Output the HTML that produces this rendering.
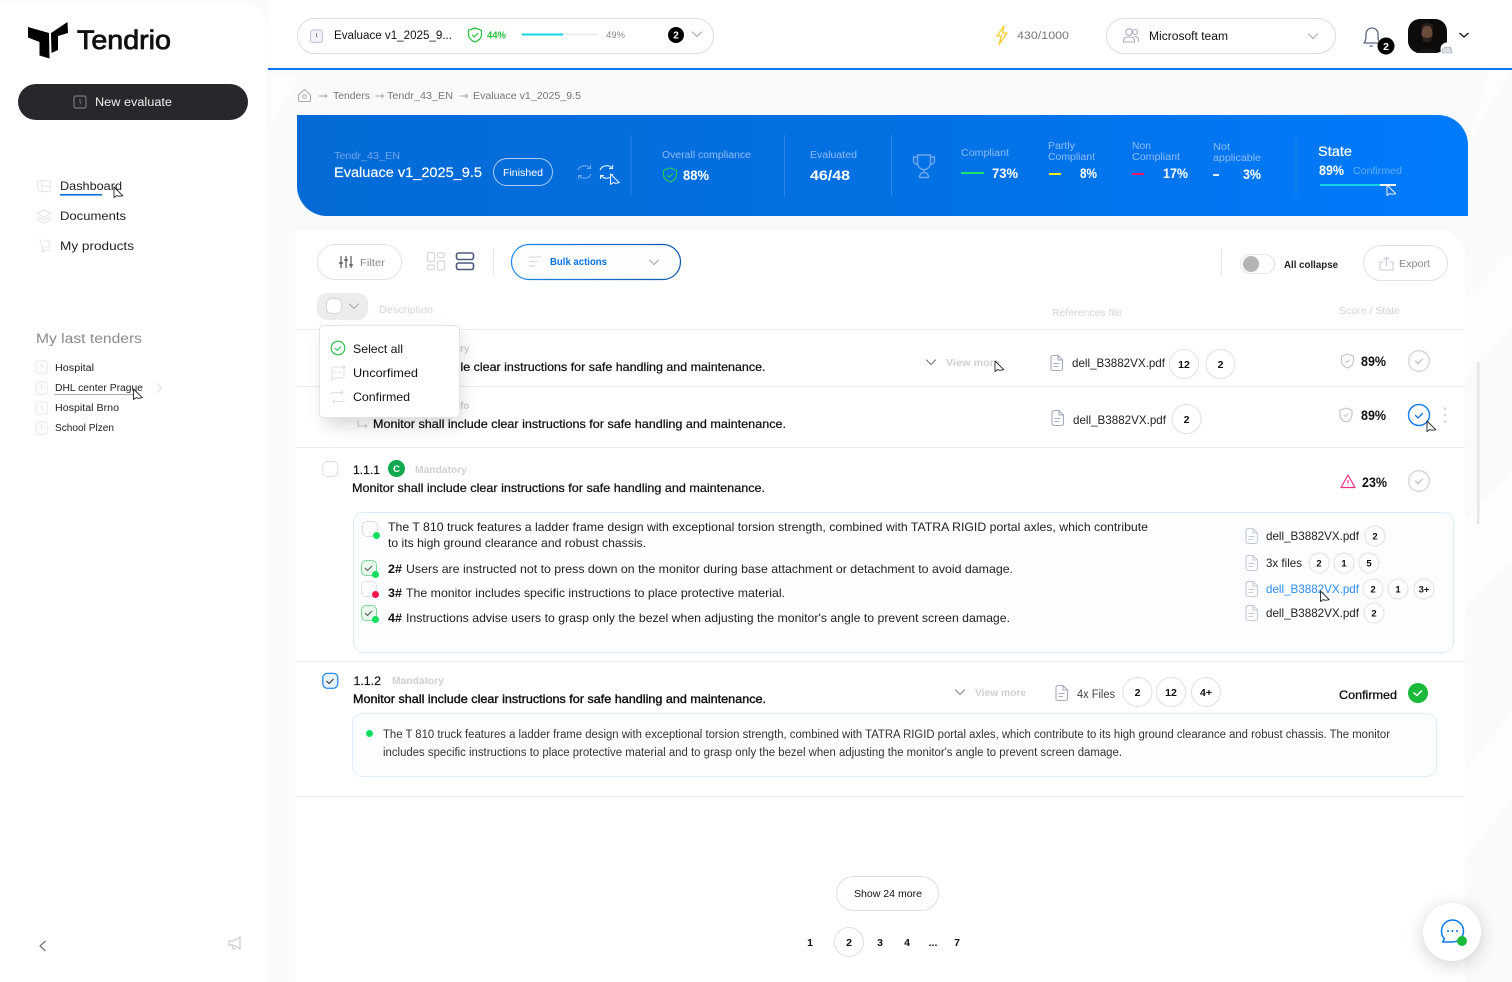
<!DOCTYPE html>
<html lang="en"><head><meta charset="utf-8"><title>Tendrio</title>
<style>
html,body{margin:0;padding:0;width:1512px;height:982px;overflow:hidden;background:#f8fafc}
svg{display:block;font-family:"Liberation Sans",sans-serif}
text{white-space:pre}
.s12{font-size:12px;fill:#222}
.m{font-size:12px;fill:#111;stroke:#111;stroke-width:.25}
.b{font-size:12px;font-weight:700;fill:#111}
.g{font-size:10px;fill:#777}
.l{font-size:10px;fill:#d8d2d2}
.lb{font-size:10px;font-weight:700;fill:#d0d0d0}
.bl{font-size:10px;fill:#8dbcf5}
.w{font-size:14px;font-weight:700;fill:#fff}
.p{font-size:14px;font-weight:700;fill:#111}
.c{text-anchor:middle;font-size:10.5px;font-weight:700;fill:#111}
.ln{fill:none;stroke:#d9d9d9;stroke-width:1}
.ic{fill:none;stroke:#c9cdd8;stroke-width:1.1;stroke-linecap:round;stroke-linejoin:round}
.dc{fill:none;stroke:#a4a9bd;stroke-width:1.1;stroke-linecap:round;stroke-linejoin:round}
.cur{fill:#fff;stroke:#222;stroke-width:.9;stroke-linejoin:round}
.curw{fill:#0a74ee;stroke:#fff;stroke-width:.9;stroke-linejoin:round}
.circ{fill:#fff;stroke:#e0e0e0;stroke-width:1}
</style></head><body>
<svg width="1512" height="982" viewBox="0 0 1512 982" xmlns="http://www.w3.org/2000/svg">
<defs>
<linearGradient id="ban" x1="0" x2="1" y1="0" y2="0"><stop offset="0" stop-color="#046bd6"/><stop offset=".5" stop-color="#0370e2"/><stop offset="1" stop-color="#007bfd"/></linearGradient>
<linearGradient id="bulk" x1="0" x2="1"><stop offset="0" stop-color="#1f86ee"/><stop offset="1" stop-color="#0a55a8"/></linearGradient>
<filter id="sh" x="-40%" y="-40%" width="180%" height="180%"><feGaussianBlur stdDeviation="9"/></filter>
<g id="doc"><path class="dc" d="M1 2.500a2 2 0 0 1 2-2h5l4.500 4.500v8.500a2 2 0 0 1-2 2H3a2 2 0 0 1-2-2z M8 .5v4.500h4.500 M4 8.500h5 M4 11.500h3.500"/></g>
<g id="cur"><path class="cur" d="M0 0l0 10.500 2.700-1.900 2.300 0.700 3.800-.6z"/></g>
<g id="curw"><path class="curw" d="M0 0l0 10.500 2.700-1.900 2.300 0.700 3.800-.6z"/></g>
<g id="chk"><circle r="10.300" fill="#fff" stroke="#d4d4d4" stroke-width="1.300"/><path d="M-3.500 .2l2.500 2.500 4.500-4.500" fill="none" stroke="#bbb" stroke-width="1.100" stroke-linecap="round" stroke-linejoin="round"/></g>
<g id="shield"><path fill="none" stroke="#c4c4c4" stroke-width="1.100" stroke-linejoin="round" d="M0-7l6 2.200v4.300c0 3.600-2.500 6.200-6 7.500-3.500-1.300-6-3.900-6-7.500v-4.300z M-2.300-.2l1.700 1.700 3-3"/></g>
<g id="chev"><path d="M-4.500-2l4.500 4.500 4.500-4.500" fill="none" stroke="#aaa" stroke-width="1.200" stroke-linecap="round" stroke-linejoin="round"/></g>
<g id="clock"><rect x=".6" y=".6" width="11.800" height="12.800" rx="2.500" fill="#fbfbfb" stroke="#eee" stroke-width="1.200"/><path d="M6.500 3.500v3l1.200 1.500" fill="none" stroke="#e3e3e3"/></g>
</defs>

<!-- background -->
<rect width="1512" height="982" fill="#f8fafc"/>
<path d="M1465 300L1512 250V330L1465 380zM1465 520L1512 470V560L1465 610zM1465 770L1512 710V800L1465 860zM270 75L300 75 270 130zM1490 70L1512 70 1470 140z" fill="#fcfdfe"/>

<!-- sidebar -->
<path d="M0 3H245a22 22 0 0 1 22 22V982H0z" fill="#fff"/>
<path d="M28 27L49 33 49.500 58.500 39.500 55.500 39.500 42 28 37.500z" fill="#000"/>
<path d="M51 33L67.500 22 68 33 58 36 58 50 51.500 53z" fill="#000"/>
<text x="77" y="49" font-size="27" fill="#111" stroke="#111" stroke-width=".8" textLength="94" lengthAdjust="spacingAndGlyphs">Tendrio</text>
<rect x="18" y="84" width="230" height="36" rx="18" fill="#27282b"/>
<rect x="74" y="96" width="12" height="12" rx="2" fill="none" stroke="#77797e" stroke-width="1.200"/><path d="M80 99v3l1 1.500" stroke="#77797e" fill="none"/>
<text x="95" y="106" font-size="11.500" fill="#eee" textLength="77" lengthAdjust="spacingAndGlyphs">New evaluate</text>

<rect x="37.500" y="180.500" width="13" height="11" rx="2.500" fill="none" stroke="#e6e6e6" stroke-width="1.200"/><path d="M42 180.500v11M42 186h8" stroke="#e6e6e6" fill="none"/>
<text x="60" y="190" class="s12" textLength="62" lengthAdjust="spacingAndGlyphs">Dashboard</text>
<rect x="60" y="194" width="42" height="1.600" fill="#0a6fe0"/>
<use href="#cur" x="114" y="187"/>
<path d="M44 210l7 3.500-7 3.500-7-3.500zM37 216.500l7 3.500 7-3.500M37 219.500l7 3.500 7-3.500" fill="none" stroke="#e4e4e4"/>
<text x="60" y="220" class="s12" textLength="66" lengthAdjust="spacingAndGlyphs">Documents</text>
<path d="M38 240h2.500l2.500 10h7.500M44 241h6l-1 6h-5" fill="none" stroke="#e4e4e4"/><circle cx="43" cy="251" r="1" fill="none" stroke="#e4e4e4"/>
<text x="60" y="250" class="s12" textLength="74" lengthAdjust="spacingAndGlyphs">My products</text>

<text x="36" y="343" font-size="13.500" fill="#8b8b8b" textLength="106" lengthAdjust="spacingAndGlyphs">My last tenders</text>
<use href="#clock" x="35" y="360"/><text x="55" y="371" font-size="10" fill="#222" textLength="39" lengthAdjust="spacingAndGlyphs">Hospital</text>
<use href="#clock" x="35" y="381"/><text x="55" y="391" font-size="10" fill="#222" textLength="88" lengthAdjust="spacingAndGlyphs">DHL center Prague</text>
<rect x="55" y="394" width="78" height="1" fill="#aaa"/><use href="#cur" x="133.500" y="389"/>
<path d="M157 383l4.500 5-4.500 5" fill="none" stroke="#e4e4e4" stroke-width="1.200"/>
<use href="#clock" x="35" y="401"/><text x="55" y="411" font-size="10" fill="#222" textLength="64" lengthAdjust="spacingAndGlyphs">Hospital Brno</text>
<use href="#clock" x="35" y="421"/><text x="55" y="431" font-size="10" fill="#222" textLength="59" lengthAdjust="spacingAndGlyphs">School Plzen</text>
<path d="M45 941.500l-5 4.500 5 4.500" fill="none" stroke="#777" stroke-width="1.300" stroke-linecap="round" stroke-linejoin="round"/>
<path d="M229 941h4l7-4v12l-7-4h-4zM232 945l1 4h2.500" fill="none" stroke="#ccc" stroke-width="1.200" stroke-linejoin="round"/>

<!-- header -->
<rect x="268" y="0" width="1244" height="68" fill="#fff"/>
<rect x="268" y="68" width="1244" height="2" fill="#0b78ee"/>
<rect x="297.500" y="18.500" width="416" height="35" rx="17.500" fill="#fff" stroke="#dedede"/>
<rect x="310.500" y="30" width="12" height="12.500" rx="2.500" fill="#f3f4f7" stroke="#c4c8d2" stroke-width="1.200"/><path d="M316.500 33v3l1 1.500" stroke="#888" fill="none"/>
<text x="334" y="39" font-size="11.500" fill="#111" textLength="118" lengthAdjust="spacingAndGlyphs">Evaluace v1_2025_9...</text>
<path d="M475 28l6.500 2.300v4.200c0 3.700-2.700 6-6.500 7.500-3.800-1.500-6.500-3.800-6.500-7.500v-4.200zM472 34.800l2.200 2.200 3.800-3.800" fill="none" stroke="#25c23f" stroke-width="1.200" stroke-linejoin="round"/>
<text x="487" y="38.500" font-size="10" font-weight="700" fill="#24c13b" textLength="19" lengthAdjust="spacingAndGlyphs">44%</text>
<rect x="522" y="33.500" width="76" height="2" fill="#eeeeee"/><rect x="522" y="33.500" width="41" height="2" fill="#14d3e3"/>
<text x="606" y="38" font-size="9.500" fill="#888" textLength="19" lengthAdjust="spacingAndGlyphs">49%</text>
<circle cx="676" cy="35" r="8" fill="#000"/><text x="676" y="38.500" font-size="10" font-weight="700" fill="#fff" text-anchor="middle">2</text>
<use href="#chev" x="697" y="34"/>
<path d="M1004 26l-7 10h4.500l-2.500 8.500 8-11.500h-4.500z" fill="none" stroke="#f7cf2a" stroke-width="1.300" stroke-linejoin="round"/>
<text x="1017" y="39" font-size="11" fill="#777" textLength="52" lengthAdjust="spacingAndGlyphs">430/1000</text>
<rect x="1106.500" y="18.500" width="229" height="35" rx="17.500" fill="#fff" stroke="#dedede"/>
<circle cx="1129" cy="32" r="3.200" class="dc"/><circle cx="1135" cy="32" r="2.500" class="dc"/><path class="dc" d="M1123.500 42v-2a4 4 0 0 1 4-3h3a4 4 0 0 1 4 3v2zM1135 36.500a3.500 3.500 0 0 1 3.500 3.500v1.500"/>
<text x="1149" y="40" font-size="11.500" fill="#111" textLength="79" lengthAdjust="spacingAndGlyphs">Microsoft team</text>
<use href="#chev" x="1313" y="36"/>
<path d="M1364 43c2-2 2-5 2-9a6 6 0 0 1 12 0c0 4 0 7 2 9zM1370 46h2.500" fill="none" stroke="#5a6685" stroke-width="1.300" stroke-linejoin="round" stroke-linecap="round"/>
<circle cx="1386" cy="46" r="8.500" fill="#000"/><text x="1386" y="50" font-size="10.500" font-weight="700" fill="#fff" text-anchor="middle">2</text>
<rect x="1408" y="19" width="39" height="34" rx="12" fill="#0e0c0b"/>
<ellipse cx="1427" cy="33" rx="5.500" ry="7.500" fill="#6a4a3c"/><path d="M1421 30q6-8 12 0l-.5-5q-5.500-4-11 0z" fill="#2a1f1a"/><path d="M1422 36q5 4 10 0l-1 5q-4 3-8 0z" fill="#2c211c"/><path d="M1416 53q11-9 22 0z" fill="#191616"/>
<circle cx="1447" cy="49" r="6.500" fill="#fff"/><path d="M1442.500 53v-4h1.500l.5-2 1.500 1 1.500-1 1.500 1 1.500-1 .3 2h1v4z" fill="#dbe0e8" stroke="#9aa2b2" stroke-width=".6"/>
<path d="M1459.500 33l4.500 4 4.500-4" fill="none" stroke="#111" stroke-width="1.400"/>

<!-- breadcrumb -->
<path class="ic" style="stroke:#aaa" d="M298.500 95l6-5.500 6 5.500v5a1.500 1.500 0 0 1-1.500 1.500h-9a1.500 1.500 0 0 1-1.500-1.500z"/><circle cx="304.500" cy="96.500" r="1.800" fill="none" stroke="#aaa"/>
<path d="M319 96h8m-2-2l2 2-2 2M375.500 96h8m-2-2l2 2-2 2M459.500 96h8m-2-2l2 2-2 2" fill="none" stroke="#aaa" stroke-width=".9"/>
<text x="333" y="99" class="g" textLength="37" lengthAdjust="spacingAndGlyphs">Tenders</text>
<text x="387" y="99" class="g" textLength="66" lengthAdjust="spacingAndGlyphs">Tendr_43_EN</text>
<text x="473" y="99" class="g" textLength="108" lengthAdjust="spacingAndGlyphs">Evaluace v1_2025_9.5</text>

<!-- banner -->
<path d="M297 115H1438a30 30 0 0 1 30 30V216H327a30 30 0 0 1-30-30z" fill="url(#ban)"/>
<text x="334" y="159" font-size="10" fill="#6fa6ec" textLength="66" lengthAdjust="spacingAndGlyphs">Tendr_43_EN</text>
<text x="334" y="177" font-size="13.500" fill="#fff" stroke="#fff" stroke-width=".15" textLength="148" lengthAdjust="spacingAndGlyphs">Evaluace v1_2025_9.5</text>
<rect x="493.500" y="158.500" width="59" height="27" rx="13.500" fill="none" stroke="#a7cbf6"/>
<text x="503" y="176" font-size="10" fill="#fff" textLength="40" lengthAdjust="spacingAndGlyphs">Finished</text>
<path d="M578 170a7 7 0 0 1 12-1.500M590.500 165v3.500h-3.500M591 174a7 7 0 0 1-12 1.500M578.500 179v-3.500h3.500" fill="none" stroke="#6fa7ee" stroke-width="1.100"/>
<path d="M600 170a7 7 0 0 1 12-1.500M612.500 165v3.500h-3.500M613 174a7 7 0 0 1-12 1.500M600.500 179v-3.500h3.500" fill="none" stroke="#e4effc" stroke-width="1.100"/>
<use href="#curw" x="610.500" y="174"/>
<g stroke="#2a86ea"><path d="M631 135V196M784.500 135V196M891.500 135V196M1296 137V197"/></g>
<text x="662" y="158" class="bl" textLength="89" lengthAdjust="spacingAndGlyphs">Overall compliance</text>
<path d="M670 168l6.500 2.300v4.200c0 3.700-2.700 6-6.500 7.500-3.800-1.500-6.500-3.800-6.500-7.500v-4.200zM667 175l2.200 2.200 3.800-3.800" fill="none" stroke="#21cf57" stroke-width="1.100" stroke-linejoin="round"/>
<text x="683" y="180" class="w" textLength="26" lengthAdjust="spacingAndGlyphs">88%</text>
<text x="810" y="158" class="bl" textLength="47" lengthAdjust="spacingAndGlyphs">Evaluated</text>
<text x="810" y="180" class="w" textLength="40" lengthAdjust="spacingAndGlyphs">46/48</text>
<path d="M917.500 155h13v8a6.500 6.500 0 0 1-13 0zM917.500 157h-4v3.500a4 4 0 0 0 4.500 4M930.500 157h4v3.500a4 4 0 0 1-4.500 4M924 169.500v3M919.500 177.500c0-3 2-5 4.500-5s4.500 2 4.500 5z" fill="none" stroke="#6ea8ee" stroke-width="1.400" stroke-linejoin="round"/>
<text x="961" y="156" class="bl" textLength="48" lengthAdjust="spacingAndGlyphs">Compliant</text>
<rect x="961" y="172" width="23" height="2" fill="#19e36f"/>
<text x="992" y="178" class="w" textLength="26" lengthAdjust="spacingAndGlyphs">73%</text>
<text x="1048" y="149" class="bl" textLength="27" lengthAdjust="spacingAndGlyphs">Partly</text><text x="1048" y="160" class="bl" textLength="47" lengthAdjust="spacingAndGlyphs">Compliant</text>
<rect x="1049" y="173" width="12" height="2" fill="#f5f010"/>
<text x="1080" y="178" class="w" textLength="17" lengthAdjust="spacingAndGlyphs">8%</text>
<text x="1132" y="149" class="bl" textLength="19" lengthAdjust="spacingAndGlyphs">Non</text><text x="1132" y="160" class="bl" textLength="48" lengthAdjust="spacingAndGlyphs">Compliant</text>
<rect x="1132" y="173" width="12" height="2" fill="#f0126c"/>
<text x="1163" y="178" class="w" textLength="25" lengthAdjust="spacingAndGlyphs">17%</text>
<text x="1213" y="150" class="bl" textLength="17" lengthAdjust="spacingAndGlyphs">Not</text><text x="1213" y="161" class="bl" textLength="48" lengthAdjust="spacingAndGlyphs">applicable</text>
<rect x="1213" y="174" width="6" height="2" fill="#dfeeff"/>
<text x="1243" y="179" class="w" textLength="18" lengthAdjust="spacingAndGlyphs">3%</text>
<text x="1318" y="156" font-size="14" fill="#fff" stroke="#fff" stroke-width=".2" textLength="34" lengthAdjust="spacingAndGlyphs">State</text>
<text x="1319" y="175" class="w" textLength="25" lengthAdjust="spacingAndGlyphs">89%</text>
<text x="1353" y="174" class="bl" textLength="49" lengthAdjust="spacingAndGlyphs" style="fill:#64adfb">Confirmed</text>
<rect x="1320" y="184" width="76" height="2" fill="#fff"/><rect x="1320" y="184" width="60" height="2" fill="#14d3e3"/>
<use href="#curw" x="1387" y="185"/>

<!-- main panel -->
<path d="M295 230H1440a25 25 0 0 1 25 25V982H295z" fill="#fff"/>
<rect x="317.500" y="244.500" width="84" height="35" rx="17.500" fill="#fff" stroke="#e2e2e2"/>
<path d="M341 256v12M346 256v12M351 256v12M339 263h4M344 260h4M349 265h4" stroke="#333" stroke-width="1" fill="none"/>
<text x="360" y="266" font-size="10.500" fill="#888" textLength="25" lengthAdjust="spacingAndGlyphs">Filter</text>
<g fill="none" stroke="#d8d8d8" stroke-width="1.300"><rect x="427.500" y="252.500" width="7" height="9" rx="1.500"/><rect x="437.500" y="253" width="7" height="4.500" rx="1.500"/><rect x="427.500" y="265" width="7" height="4.500" rx="1.500"/><rect x="437.500" y="261" width="7" height="9" rx="1.500"/></g>
<g fill="none" stroke="#4a5a78" stroke-width="1.600"><rect x="456.500" y="253" width="17" height="6.500" rx="2"/><rect x="456.500" y="263" width="17" height="6.500" rx="2"/></g>
<rect x="493" y="249" width="1" height="25" fill="#e3e3e3"/>
<rect x="511.500" y="244.500" width="169" height="35" rx="17.500" fill="#fbfdff" stroke="url(#bulk)" stroke-width="1.200"/>
<path d="M529 257h12M529 261.500h9M529 266h6" stroke="#ddd" stroke-width="1.300" fill="none"/>
<text x="550" y="265" font-size="10.500" font-weight="700" fill="#0a6fe0" textLength="57" lengthAdjust="spacingAndGlyphs">Bulk actions</text>
<use href="#chev" x="654" y="262"/>
<rect x="1221" y="249" width="1" height="26" fill="#e3e3e3"/>
<rect x="1240.500" y="254.500" width="34" height="19" rx="9.500" fill="#fff" stroke="#e4e4e4"/><circle cx="1251" cy="264" r="8" fill="#b4b4b4"/>
<text x="1284" y="268" font-size="10" font-weight="700" fill="#222" textLength="54" lengthAdjust="spacingAndGlyphs">All collapse</text>
<rect x="1363.500" y="245.500" width="84" height="35" rx="17.500" fill="#fff" stroke="#e2e2e2"/>
<path class="ic" d="M1383 262h-3v8h13v-8h-3M1386.500 266v-9m-2.500 2.500l2.500-2.500 2.500 2.500"/>
<text x="1399" y="267" font-size="10.500" fill="#888" textLength="31" lengthAdjust="spacingAndGlyphs">Export</text>

<rect x="317" y="293" width="51" height="27" rx="10" fill="#ececec"/>
<rect x="326.500" y="298.500" width="15" height="15" rx="5" fill="#fff" stroke="#d8d8d8"/>
<use href="#chev" x="354" y="306"/>
<text x="379" y="313" class="l" textLength="54" lengthAdjust="spacingAndGlyphs">Description</text>
<text x="1052" y="316" class="l" textLength="70" lengthAdjust="spacingAndGlyphs">References file</text>
<text x="1339" y="314" class="l" textLength="61" lengthAdjust="spacingAndGlyphs">Score / State</text>
<g fill="#ececec"><rect x="296" y="329" width="1169" height="1"/><rect x="296" y="386" width="1169" height="1"/><rect x="296" y="447" width="1169" height="1"/><rect x="296" y="661" width="1169" height="1"/><rect x="296" y="796" width="1169" height="1"/></g>

<!-- row 1 -->
<text x="460" y="352" class="lb">ry</text>
<text x="460.500" y="371" class="m" textLength="305" lengthAdjust="spacingAndGlyphs">le clear instructions for safe handling and maintenance.</text>
<path d="M926.500 360l4.500 4.500 4.500-4.500" fill="none" stroke="#777" stroke-width="1.200" stroke-linecap="round" stroke-linejoin="round"/>
<text x="946" y="366" class="lb" textLength="54" lengthAdjust="spacingAndGlyphs">View more</text>
<use href="#cur" x="995" y="361"/>
<use href="#doc" x="1050" y="355"/>
<text x="1072" y="367" class="s12" textLength="93" lengthAdjust="spacingAndGlyphs">dell_B3882VX.pdf</text>
<circle cx="1184" cy="364" r="14.500" class="circ"/><text x="1184" y="368" class="c">12</text>
<circle cx="1220.500" cy="364" r="14.500" class="circ"/><text x="1220.500" y="368" class="c">2</text>
<use href="#shield" x="1347.500" y="361"/>
<text x="1361" y="366" class="p" textLength="25" lengthAdjust="spacingAndGlyphs">89%</text>
<use href="#chk" x="1419" y="361"/>

<!-- row 2 -->
<text x="460" y="409" class="lb">fo</text>
<path d="M358 420v6h9m-2-2l2 2-2 2" fill="none" stroke="#ccc"/>
<text x="373" y="428" class="m" textLength="413" lengthAdjust="spacingAndGlyphs">Monitor shall include clear instructions for safe handling and maintenance.</text>
<use href="#doc" x="1051" y="410"/>
<text x="1073" y="424" class="s12" textLength="93" lengthAdjust="spacingAndGlyphs">dell_B3882VX.pdf</text>
<circle cx="1186.500" cy="419" r="14.500" class="circ"/><text x="1186.500" y="423" class="c">2</text>
<use href="#shield" x="1346" y="415"/>
<text x="1361" y="420" class="p" textLength="25" lengthAdjust="spacingAndGlyphs">89%</text>
<circle cx="1419" cy="415" r="10.500" fill="#fff" stroke="#1a80ef" stroke-width="1.500"/><path d="M1415.500 415.500l2.500 2.500 4.500-4.500" fill="none" stroke="#1a6fd5" stroke-width="1.300" stroke-linecap="round" stroke-linejoin="round"/>
<g fill="#d5d5d5"><circle cx="1445" cy="408.500" r="1.300"/><circle cx="1445" cy="415" r="1.300"/><circle cx="1445" cy="421.500" r="1.300"/></g>
<use href="#cur" x="1427" y="421"/>

<!-- dropdown -->
<rect x="325" y="335" width="135" height="90" rx="4" fill="#000" opacity=".16" filter="url(#sh)"/>
<rect x="319.500" y="325.500" width="140" height="92" rx="4" fill="#fff" stroke="#e4e4e4"/>
<circle cx="338" cy="348" r="6.800" fill="none" stroke="#21c04a" stroke-width="1.100"/><path d="M335 348.200l2.200 2.200 3.800-3.800" fill="none" stroke="#21c04a" stroke-width="1.100"/>
<text x="353" y="353" font-size="12" fill="#111" textLength="50" lengthAdjust="spacingAndGlyphs">Select all</text>
<path d="M332 367h11v2.500M344 371v6a1 1 0 0 1-1 1h-8l-3 2v-13" fill="none" stroke="#dde0ea" stroke-width="1.100"/><circle cx="344" cy="367" r="1" fill="none" stroke="#cfd3df" stroke-width=".8"/><path d="M335 372.500h6" stroke="#cfd3df" stroke-dasharray="1 1.500"/>
<text x="353" y="377" font-size="12" fill="#111" textLength="65" lengthAdjust="spacingAndGlyphs">Uncorfimed</text>
<path d="M332 395v-2.500h11m-2-2l2 2-2 2M344 399v2.500h-11m2 2l-2-2 2-2" fill="none" stroke="#dde0ea" stroke-width="1.100"/>
<text x="353" y="401" font-size="12" fill="#111" textLength="57" lengthAdjust="spacingAndGlyphs">Confirmed</text>

<!-- row 3 -->
<rect x="322.800" y="461.500" width="15" height="15" rx="4.500" fill="#fff" stroke="#dcdcdc"/>
<text x="353" y="474" font-size="12" fill="#111" stroke="#111" stroke-width=".2" textLength="27" lengthAdjust="spacingAndGlyphs">1.1.1</text>
<circle cx="396.500" cy="468.500" r="8.500" fill="#12a84f"/><text x="396.500" y="472" font-size="9.500" font-weight="700" fill="#fff" text-anchor="middle">C</text>
<text x="415" y="473" class="lb" textLength="52" lengthAdjust="spacingAndGlyphs">Mandatory</text>
<text x="352" y="492" class="m" textLength="413" lengthAdjust="spacingAndGlyphs">Monitor shall include clear instructions for safe handling and maintenance.</text>
<path d="M1348 475l7 12.500h-14zM1348 480v3.500M1348 485v.4" fill="none" stroke="#ef2f86" stroke-width="1.200" stroke-linejoin="round"/>
<text x="1362" y="487" class="p" textLength="25" lengthAdjust="spacingAndGlyphs">23%</text>
<use href="#chk" x="1419" y="481"/>

<rect x="353.500" y="512.500" width="1100" height="140" rx="10" fill="#fbfdff" stroke="#deedfb"/>
<rect x="362.500" y="521.500" width="15" height="15" rx="4.500" fill="#fff" stroke="#dcdcdc"/><circle cx="376.500" cy="535.500" r="3.500" fill="#12dd5f"/>
<text x="388" y="531" class="s12" textLength="760" lengthAdjust="spacingAndGlyphs">The T 810 truck features a ladder frame design with exceptional torsion strength, combined with TATRA RIGID portal axles, which contribute</text>
<text x="388" y="547" class="s12" textLength="258" lengthAdjust="spacingAndGlyphs">to its high ground clearance and robust chassis.</text>
<rect x="361.500" y="560.500" width="15" height="15" rx="4.500" fill="#e9f8ec" stroke="#7fd497"/><path d="M365 568l2.500 2.500 4.500-4.500" fill="none" stroke="#555" stroke-width="1"/><circle cx="375.500" cy="574.500" r="3.500" fill="#12dd5f"/>
<text x="388" y="573" class="b" textLength="14" lengthAdjust="spacingAndGlyphs">2#</text>
<text x="406" y="573" class="s12" textLength="607" lengthAdjust="spacingAndGlyphs">Users are instructed not to press down on the monitor during base attachment or detachment to avoid damage.</text>
<rect x="361.500" y="581.500" width="15" height="15" rx="4.500" fill="#fff" stroke="#e0e0e0"/><circle cx="375.500" cy="594.500" r="3.500" fill="#f5154c"/>
<text x="388" y="597" class="b" textLength="14" lengthAdjust="spacingAndGlyphs">3#</text>
<text x="406" y="597" class="s12" textLength="379" lengthAdjust="spacingAndGlyphs">The monitor includes specific instructions to place protective material.</text>
<rect x="361.500" y="605.500" width="15" height="15" rx="4.500" fill="#e9f8ec" stroke="#7fd497"/><path d="M365 613l2.500 2.500 4.500-4.500" fill="none" stroke="#555" stroke-width="1"/><circle cx="375.500" cy="619.500" r="3.500" fill="#12dd5f"/>
<text x="388" y="622" class="b" textLength="14" lengthAdjust="spacingAndGlyphs">4#</text>
<text x="406" y="622" class="s12" textLength="604" lengthAdjust="spacingAndGlyphs">Instructions advise users to grasp only the bezel when adjusting the monitor's angle to prevent screen damage.</text>

<g opacity=".6"><use href="#doc" x="1245" y="528"/><use href="#doc" x="1245" y="555"/><use href="#doc" x="1245" y="581"/><use href="#doc" x="1245" y="605"/></g>
<text x="1266" y="540" class="s12" textLength="93" lengthAdjust="spacingAndGlyphs">dell_B3882VX.pdf</text>
<circle cx="1375" cy="536" r="10" class="circ"/><text x="1375" y="539.500" class="c" style="font-size:9.500px">2</text>
<text x="1266" y="567" class="s12" textLength="36" lengthAdjust="spacingAndGlyphs">3x files</text>
<circle cx="1319" cy="563" r="10" class="circ"/><text x="1319" y="566.500" class="c" style="font-size:9.500px">2</text>
<circle cx="1344" cy="563" r="10" class="circ"/><text x="1344" y="566.500" class="c" style="font-size:9.500px">1</text>
<circle cx="1369" cy="563" r="10" class="circ"/><text x="1369" y="566.500" class="c" style="font-size:9.500px">5</text>
<text x="1266" y="593" font-size="12" fill="#2c8cf3" textLength="93" lengthAdjust="spacingAndGlyphs">dell_B3882VX.pdf</text>
<use href="#cur" x="1320.500" y="591"/>
<circle cx="1373" cy="589" r="10" class="circ"/><text x="1373" y="592.500" class="c" style="font-size:9.500px">2</text>
<circle cx="1398" cy="589" r="10" class="circ"/><text x="1398" y="592.500" class="c" style="font-size:9.500px">1</text>
<circle cx="1424" cy="589" r="10" class="circ"/><text x="1424" y="592.500" class="c" style="font-size:9.500px">3+</text>
<text x="1266" y="617" class="s12" textLength="93" lengthAdjust="spacingAndGlyphs">dell_B3882VX.pdf</text>
<circle cx="1374" cy="613" r="10" class="circ"/><text x="1374" y="616.500" class="c" style="font-size:9.500px">2</text>

<!-- row 4 -->
<rect x="322.800" y="673.300" width="15" height="15" rx="4.500" fill="#e6f1fd" stroke="#1a80ef" stroke-width="1.200"/><path d="M326.500 681l2.500 2.500 4.500-4.500" fill="none" stroke="#333" stroke-width="1.100"/>
<text x="353.500" y="685" font-size="12" fill="#111" stroke="#111" stroke-width=".2" textLength="27.500" lengthAdjust="spacingAndGlyphs">1.1.2</text>
<text x="392" y="684" class="lb" textLength="52" lengthAdjust="spacingAndGlyphs">Mandatory</text>
<text x="353" y="703" class="m" style="stroke-width:.4" textLength="413" lengthAdjust="spacingAndGlyphs">Monitor shall include clear instructions for safe handling and maintenance.</text>
<path d="M955.500 690l4.500 4.500 4.500-4.500" fill="none" stroke="#888" stroke-width="1.200" stroke-linecap="round" stroke-linejoin="round"/>
<text x="975" y="696" class="lb" textLength="51" lengthAdjust="spacingAndGlyphs">View more</text>
<use href="#doc" x="1055" y="685"/>
<text x="1077" y="698" font-size="11.500" fill="#444" textLength="38" lengthAdjust="spacingAndGlyphs">4x Files</text>
<circle cx="1137.500" cy="692" r="14.500" class="circ"/><text x="1137.500" y="696" class="c">2</text>
<circle cx="1171" cy="692" r="14.500" class="circ"/><text x="1171" y="696" class="c">12</text>
<circle cx="1206" cy="692" r="14.500" class="circ"/><text x="1206" y="696" class="c">4+</text>
<text x="1339" y="699" class="m" style="stroke-width:.3" textLength="58" lengthAdjust="spacingAndGlyphs">Confirmed</text>
<circle cx="1418" cy="693" r="10" fill="#1bb93a"/><path d="M1414 693l3 2.500 4.500-4.500" fill="none" stroke="#fff" stroke-width="1.500" stroke-linecap="round" stroke-linejoin="round"/>
<rect x="352.500" y="713.500" width="1084" height="63" rx="10" fill="#fbfdff" stroke="#deedfb"/>
<circle cx="369.500" cy="733.500" r="3.500" fill="#12dd5f"/>
<text x="383" y="738" font-size="11.500" fill="#333" textLength="1007" lengthAdjust="spacingAndGlyphs">The T 810 truck features a ladder frame design with exceptional torsion strength, combined with TATRA RIGID portal axles, which contribute to its high ground clearance and robust chassis. The monitor</text>
<text x="383" y="756" font-size="11.500" fill="#333" textLength="739" lengthAdjust="spacingAndGlyphs">includes specific instructions to place protective material and to grasp only the bezel when adjusting the monitor's angle to prevent screen damage.</text>

<!-- footer -->
<rect x="836.500" y="876.500" width="102" height="34" rx="17" fill="#fff" stroke="#dedede"/>
<text x="854" y="897" font-size="10.500" fill="#111" textLength="68" lengthAdjust="spacingAndGlyphs">Show 24 more</text>
<ellipse cx="849" cy="942" rx="14.500" ry="14.500" class="circ"/>
<text x="810" y="946" class="c">1</text><text x="849" y="946" class="c">2</text><text x="880" y="946" class="c">3</text><text x="907" y="946" class="c">4</text><text x="933" y="946" class="c">...</text><text x="957" y="946" class="c">7</text>
<rect x="1477" y="362" width="2.500" height="162" fill="#e6e6e6"/>
<circle cx="1452" cy="936" r="29" fill="#000" opacity=".18" filter="url(#sh)"/>
<circle cx="1452" cy="932" r="29" fill="#fff"/>
<path d="M1441.500 931a11 11 0 0 1 22 0c0 6-5 11-11 11h-10l2-3a11 11 0 0 1-3-8z" fill="none" stroke="#0f78ec" stroke-width="1.500" stroke-linejoin="round"/>
<g fill="#0f78ec"><circle cx="1448" cy="931" r="1"/><circle cx="1452.500" cy="931" r="1"/><circle cx="1457" cy="931" r="1"/></g>
<circle cx="1462" cy="941" r="5" fill="#1bb93a"/>
</svg>
</body></html>
